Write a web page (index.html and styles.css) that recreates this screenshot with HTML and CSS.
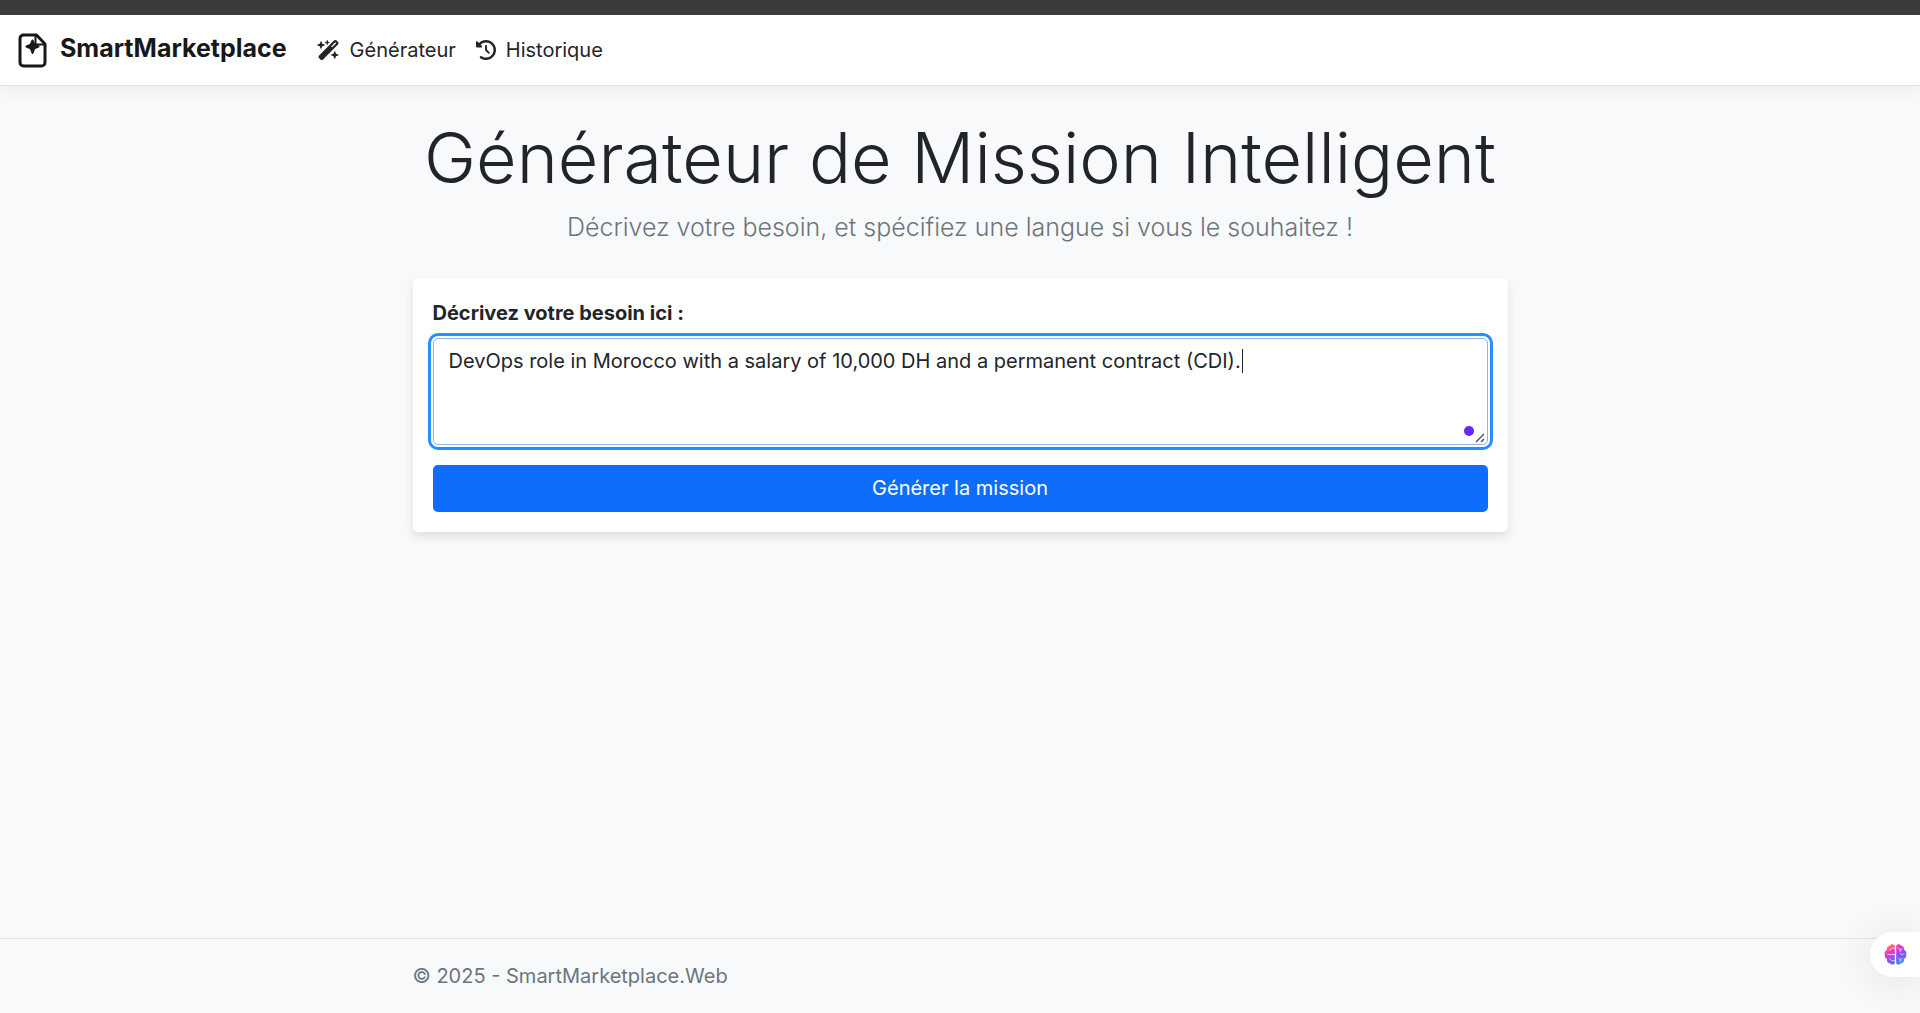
FILE: index.html
```html
<!DOCTYPE html>
<html lang="fr">
<head>
  <meta charset="utf-8">
  <meta name="viewport" content="width=device-width, initial-scale=1">
  <title>Générateur de Mission - SmartMarketplace</title>
  <link rel="stylesheet" href="styles.css">
</head>
<body>
  <header class="site-header">
    <nav class="navbar">
      <a class="brand" href="#">
        <svg class="brand-logo" viewBox="0 0 35 36" fill="none" stroke="currentColor" stroke-width="3" stroke-linejoin="round" stroke-linecap="round" aria-hidden="true">
          <path d="M21.500 3H8.500a3.500 3.500 0 0 0-3.500 3.500v24a3.500 3.500 0 0 0 3.500 3.500h18a3.500 3.500 0 0 0 3.500-3.500V12z"/>
          <path d="M20.500 4v8.500h9" stroke-width="2"/>
          <path d="M17.500 8.500l1.800 4.200 4.200 1.800-4.200 1.800-1.800 4.700-1.800-4.700-4.200-1.800 4.200-1.800z" fill="currentColor" stroke-width="2"/>
        </svg>
        <span>SmartMarketplace</span>
      </a>
      <ul class="nav-list">
        <li><a class="nav-link" href="#">
          <svg class="nav-icon nav-icon-wide" viewBox="0 0 576 512" fill="currentColor" aria-hidden="true"><path d="M234.700 42.700L197 56.800c-3 1.100-5 4-5 7.200s2 6.100 5 7.200l37.700 14.100L248.800 123c1.100 3 4 5 7.200 5s6.100-2 7.200-5l14.100-37.700L315 71.200c3-1.100 5-4 5-7.200s-2-6.100-5-7.200L277.300 42.700 263.200 5c-1.100-3-4-5-7.200-5s-6.100 2-7.200 5L234.700 42.700zM46.100 395.400c-18.700 18.700-18.700 49.100 0 67.900l34.600 34.600c18.700 18.700 49.100 18.700 67.900 0L529.900 116.500c18.700-18.700 18.700-49.100 0-67.900L495.300 14.100c-18.700-18.700-49.100-18.700-67.900 0L46.100 395.400zM484.600 82.600l-105 105-23.300-23.300 105-105 23.300 23.300zM7.500 117.200C3 118.900 0 123.200 0 128s3 9.100 7.500 10.800L64 160l21.200 56.500c1.700 4.500 6 7.500 10.800 7.500s9.100-3 10.800-7.500L128 160l56.500-21.200c4.500-1.700 7.500-6 7.500-10.800s-3-9.100-7.500-10.800L128 96 106.800 39.500C105.100 35 100.800 32 96 32s-9.100 3-10.800 7.500L64 96 7.500 117.200zm352 256c-4.500 1.700-7.500 6-7.500 10.800s3 9.100 7.500 10.800L416 416l21.200 56.500c1.700 4.500 6 7.500 10.800 7.500s9.100-3 10.800-7.500L480 416l56.500-21.200c4.500-1.700 7.500-6 7.500-10.800s-3-9.100-7.500-10.800L480 352l-21.200-56.500c-1.700-4.500-6-7.500-10.800-7.500s-9.100 3-10.800 7.500L416 352l-56.500 21.200z"/></svg>
          <span>Générateur</span>
        </a></li>
        <li><a class="nav-link" href="#">
          <svg class="nav-icon" viewBox="0 0 512 512" fill="currentColor" aria-hidden="true"><path d="M75 75L41 41C25.900 25.900 0 36.600 0 57.900V168c0 13.300 10.700 24 24 24H134.100c21.400 0 32.100-25.900 17-41l-30.800-30.800C155 85.500 203 64 256 64c106 0 192 86 192 192s-86 192-192 192c-40.800 0-78.600-12.700-109.700-34.400c-14.500-10.100-34.400-6.600-44.600 7.900s-6.600 34.400 7.900 44.600C151.200 495 201.700 512 256 512c141.400 0 256-114.600 256-256S397.400 0 256 0C185.300 0 121.300 28.700 75 75zm181 53c-13.300 0-24 10.700-24 24V256c0 6.400 2.500 12.500 7 17l72 72c9.400 9.400 24.600 9.400 33.900 0s9.400-24.600 0-33.900l-65-65V152c0-13.300-10.700-24-24-24z"/></svg>
          <span>Historique</span>
        </a></li>
      </ul>
    </nav>
  </header>

  <main class="container">
    <h1 class="page-title">Générateur de Mission Intelligent</h1>
    <p class="lead">Décrivez votre besoin, et spécifiez une langue si vous le souhaitez !</p>
    <form class="card">
      <label class="field-label" for="besoin">Décrivez votre besoin ici :</label>
      <div class="field">
        <textarea class="field-input" id="besoin" rows="3" spellcheck="false">DevOps role in Morocco with a salary of 10,000 DH and a permanent contract (CDI).</textarea>
        <span class="caret"></span>
        <span class="assist-dot"></span>
        <svg class="grip" viewBox="0 0 10 10" fill="none" stroke="#555" stroke-width="1.500" aria-hidden="true">
          <path d="M1 9l8-8M6 9l3-3"/>
        </svg>
      </div>
      <button class="submit" type="button">Générer la mission</button>
    </form>
  </main>

  <footer class="site-footer">
    <div class="container">© 2025 - SmartMarketplace.Web</div>
  </footer>

  <button class="assistant" type="button" aria-label="Assistant">
    <svg class="assistant-icon" viewBox="0 0 24 24" aria-hidden="true">
      <defs>
        <linearGradient id="brain" x1="0.150" y1="0" x2="0.850" y2="1">
          <stop offset="0" stop-color="#ff9a1e"/>
          <stop offset="0.300" stop-color="#f633c5"/>
          <stop offset="0.500" stop-color="#a747f5"/>
          <stop offset="0.700" stop-color="#6c5cf6"/>
          <stop offset="1" stop-color="#1fb0ff"/>
        </linearGradient>
      </defs>
      <g fill="url(#brain)">
        <path d="M11.300 3v18c-.5 1.800-3.800 2.200-5 0-2.300 0-3.800-2-3-4.200C1.300 16 .3 14 1 12.200-.1 10 1 7.800 3 7.200 2.500 4.800 4.200 3 6 2.800 7 .7 10.500.5 11.300 3zM12.700 3v18c.5 1.800 3.800 2.200 5 0 2.300 0 3.800-2 3-4.200 2-.8 3-2.800 2.300-4.600C24.100 10 23 7.800 21 7.200c.5-2.400-1.200-4.200-3-4.400C17 .7 13.500.5 12.700 3z"/>
      </g>
      <path fill="none" stroke="#fff" stroke-opacity="0.800" stroke-width="0.900" stroke-linecap="round" d="M11 5.500H8.500L6 7.500M11 12H4M11 18.500H8L6 16.500M15 5l2 2 2-1M17 7v2M17 11l2 1.500L21 11M15 16l2 1.500 2-1.500M17 17.500v2"/>
    </svg>
  </button>
</body>
</html>
```

FILE: styles.css
```css
* {
  box-sizing: border-box;
}

body {
  margin: 0;
  min-height: 100vh;
  display: flex;
  flex-direction: column;
  border-top: 15px solid #3b3b3b;
  background: #f8f9fb;
  color: #212529;
  font-family: Inter, "Liberation Sans", sans-serif;
  font-size: 20px;
  line-height: 30px;
}

.site-header {
  background: #fff;
  border-bottom: 1px solid #dee2e6;
  box-shadow: 0 5px 15px rgba(0, 0, 0, 0.05);
}

.navbar {
  display: flex;
  align-items: center;
  height: 70px;
  padding: 0 15px;
}

.brand {
  display: flex;
  align-items: center;
  gap: 10px;
  margin-right: 20px;
  color: #16181b;
  font-size: 25px;
  font-weight: 700;
  text-decoration: none;
}

.brand span {
  padding-bottom: 4px;
}

.brand-logo {
  width: 35px;
  height: 36px;
}

.nav-list {
  display: flex;
  margin: 0;
  padding: 0;
  list-style: none;
}

.nav-link {
  display: flex;
  align-items: center;
  gap: 10px;
  padding: 10px;
  color: #212529;
  text-decoration: none;
}

.nav-icon {
  width: 20px;
  height: 20px;
}

.nav-icon-wide {
  width: 23px;
}

.container {
  width: 100%;
  max-width: 1095px;
  margin: 0 auto;
}

.page-title {
  margin: 30px 0 10px;
  font-size: 70px;
  font-weight: 300;
  line-height: 84px;
  text-align: center;
}

.lead {
  margin: 0 0 34px;
  color: #6c757d;
  font-size: 25px;
  font-weight: 300;
  line-height: 34px;
  text-align: center;
}

.card {
  display: flex;
  flex-direction: column;
  padding: 20px;
  border-radius: 5px;
  background: #fff;
  box-shadow: 0 5px 10px rgba(0, 0, 0, 0.1);
}

.field-label {
  margin-bottom: 10px;
  font-weight: 700;
}

.field {
  position: relative;
  display: flex;
  margin-bottom: 20px;
}

.field-input {
  width: 100%;
  height: 107px;
  padding: 7px 15px;
  border: 1px solid #86b7fe;
  border-radius: 5px;
  outline: 3px solid #268fff;
  outline-offset: 2px;
  background: #fff;
  color: #212529;
  font: inherit;
  resize: vertical;
}

.field-input::-webkit-resizer {
  background: transparent;
}

.caret {
  position: absolute;
  top: 11px;
  left: 809px;
  width: 1px;
  height: 24px;
  background: #212529;
}

.assist-dot {
  position: absolute;
  right: 14px;
  bottom: 9px;
  width: 10px;
  height: 10px;
  border-radius: 50%;
  background: #6128ff;
}

.grip {
  position: absolute;
  right: 3px;
  bottom: 2px;
  width: 10px;
  height: 10px;
  pointer-events: none;
}

.submit {
  height: 47px;
  padding: 0 0 2px;
  border: 0;
  border-radius: 5px;
  background: #0d6efd;
  color: #fff;
  font: inherit;
}

.site-footer {
  margin-top: auto;
  padding: 22px 0;
  border-top: 1px solid #dee2e6;
  color: #6c757d;
}

.assistant {
  position: fixed;
  right: 0;
  bottom: 36px;
  display: flex;
  align-items: center;
  width: 50px;
  height: 45px;
  padding: 0 0 0 14px;
  border: 0;
  border-radius: 23px 0 0 23px;
  background: #fff;
  box-shadow: 0 4px 40px rgba(0, 0, 0, 0.1);
}

.assistant-icon {
  width: 23px;
  height: 23px;
}
```
